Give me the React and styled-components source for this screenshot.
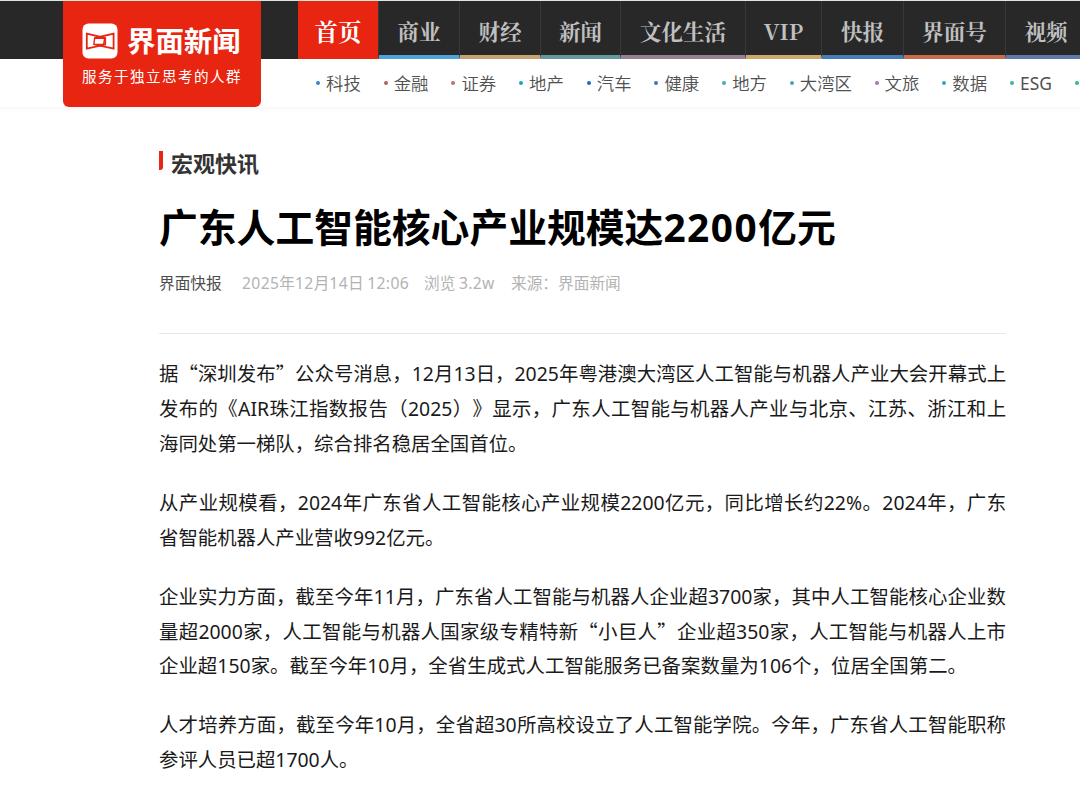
import styled, { createGlobalStyle } from "styled-components";

const GlobalStyle = createGlobalStyle`
    * {
        box-sizing: border-box;
    }
    body {
        margin: 0;
        background-color: #fff;
        font-family: "Noto Sans CJK SC", sans-serif;
        text-spacing-trim: space-all;
        overflow: hidden;
    }
`;

const Page = styled.div`
    width: 1080px;
    height: 792px;
    overflow: hidden;
`;

const Header = styled.header`
    position: relative;
    height: 107px;
    background-color: #fff;
    box-shadow: 0 1px 6px rgba(0, 0, 0, 0.05);
`;

const TopBar = styled.div`
    height: 59px;
    padding-left: 298px;
    border-top: 1px solid #dfe5e1;
    background-color: #282828;
    display: flex;
    overflow: hidden;
`;

const TopLink = styled.a`
    flex: none;
    width: ${(props) => props.$width}px;
    height: 58px;
    padding-top: 3px;
    border-right: 1px solid #383838;
    border-bottom: 4px solid ${(props) => props.$color};
    background-color: ${(props) => (props.$active ? "#e72511" : "transparent")};
    color: ${(props) => (props.$active ? "#fff" : "#bfbfbf")};
    font-family: "Noto Serif CJK SC", "Liberation Serif", serif;
    font-size: ${(props) => (props.$active ? 23.4 : 21.6)}px;
    font-weight: bold;
    line-height: 54px;
    text-align: center;
    white-space: nowrap;
`;

const SubBar = styled.div`
    height: 48px;
    padding-left: 316px;
    display: flex;
    align-items: center;
    overflow: hidden;
`;

const SubLink = styled.a`
    flex: none;
    width: ${(props) => props.$width}px;
    display: flex;
    align-items: center;
    color: #505050;
    font-size: 17.4px;
    font-weight: 350;
    line-height: 24px;
    white-space: nowrap;
    &::before {
        content: "";
        width: 4px;
        height: 4px;
        margin-right: 6px;
        border-radius: 50%;
        background-color: ${(props) => props.$color};
    }
`;

const SubText = styled.span`
    height: 24px;
`;

/* hangs over both bars */
const Brand = styled.a`
    position: absolute;
    top: 1px;
    left: 63px;
    width: 198px;
    height: 106px;
    padding: 22px 0 0 19px;
    border-radius: 0 0 6px 6px;
    background-color: #e72511;
    color: #fff;
`;

const BrandRow = styled.div`
    height: 36px;
    display: flex;
    align-items: center;
    gap: 9px;
    svg {
        flex: none;
    }
`;

const BrandName = styled.span`
    margin-top: -2px;
    font-size: 28.4px;
    font-weight: bold;
    line-height: 36px;
    white-space: nowrap;
`;

const Slogan = styled.div`
    margin-top: 6px;
    font-size: 14.6px;
    letter-spacing: 1.4px;
    line-height: 22px;
    white-space: nowrap;
`;

const Article = styled.article`
    width: 847px;
    margin-left: 159px;
    padding-top: 40px;
`;

const Channel = styled.div`
    height: 30px;
    display: flex;
    align-items: center;
    color: #333;
    font-size: 22px;
    font-weight: bold;
    line-height: 30px;
    &::before {
        content: "";
        width: 4px;
        height: 19px;
        margin: 0 8px 3px 0;
        border-radius: 0 0 3px 0;
        background-color: #e72511;
    }
`;

const Title = styled.h1`
    margin: 19px 0 0;
    height: 58px;
    color: #000;
    font-size: 38.8px;
    font-weight: bold;
    line-height: 58px;
    white-space: nowrap;
`;

const Meta = styled.div`
    height: 80px;
    padding-top: 17px;
    margin-bottom: 22px;
    border-bottom: 1px solid #e8e8e8;
    display: flex;
    color: #b3b3b3;
    font-size: 15.7px;
    line-height: 24px;
    white-space: nowrap;
`;

const MetaItem = styled.span`
    width: ${(props) => props.$width}px;
    color: ${(props) => (props.$dark ? "#4c4c4c" : "inherit")};
`;

const Paragraph = styled.p`
    margin: 0 0 24.1px;
    color: #1a1a1a;
    font-size: 19.4px;
    line-height: 34.9px;
`;

const Line = styled.span`
    display: block;
    width: ${(props) => (props.$width ? `${props.$width}px` : "100%")};
    height: 34.9px;
    text-align: justify;
    text-align-last: justify;
    white-space: nowrap;
`;

const Latin = styled.span`
    font-family: "Noto Sans", sans-serif;
    font-weight: ${(props) => props.$weight || "inherit"};
    letter-spacing: ${(props) => props.$spacing || 0}px;
    line-height: 1;
`;

const topLinks = [
    { text: "首页", width: 81, color: "#e72511", active: true },
    { text: "商业", width: 81, color: "#4fa3d8" },
    { text: "财经", width: 81, color: "#c9a36d" },
    { text: "新闻", width: 80, color: "#639a9d" },
    { text: "文化生活", width: 125, color: "#94808f" },
    { text: "VIP", width: 76, color: "#cba86c" },
    { text: "快报", width: 82, color: "#467cb8" },
    { text: "界面号", width: 102, color: "#c66b4c" },
    { text: "视频", width: 81, color: "#5d7ba6" },
];

const subLinks = [
    { text: "科技", width: 67.7, color: "#3585d0" },
    { text: "金融", width: 67.7, color: "#b9604f" },
    { text: "证券", width: 67.7, color: "#b27a65" },
    { text: "地产", width: 67.7, color: "#19a2bd" },
    { text: "汽车", width: 67.7, color: "#2567c5" },
    { text: "健康", width: 67.7, color: "#4c70b8" },
    { text: "地方", width: 67.7, color: "#42afad" },
    { text: "大湾区", width: 84.8, color: "#4aa6af" },
    { text: "文旅", width: 67.7, color: "#a279b0" },
    { text: "数据", width: 67.7, color: "#38a5b5" },
    { text: "ESG", width: 65, color: "#3bb59b" },
    { text: "", width: 10, color: "#3bb58d" },
];

const paragraphs = [
    [
        { text: "据“深圳发布”公众号消息，12月13日，2025年粤港澳大湾区人工智能与机器人产业大会开幕式上" },
        { text: "发布的《AIR珠江指数报告（2025）》显示，广东人工智能与机器人产业与北京、江苏、浙江和上" },
        { text: "海同处第一梯队，综合排名稳居全国首位。", width: 368 },
    ],
    [
        { text: "从产业规模看，2024年广东省人工智能核心产业规模2200亿元，同比增长约22%。2024年，广东" },
        { text: "省智能机器人产业营收992亿元。", width: 285 },
    ],
    [
        { text: "企业实力方面，截至今年11月，广东省人工智能与机器人企业超3700家，其中人工智能核心企业数" },
        { text: "量超2000家，人工智能与机器人国家级专精特新“小巨人”企业超350家，人工智能与机器人上市" },
        { text: "企业超150家。截至今年10月，全省生成式人工智能服务已备案数量为106个，位居全国第二。", width: 808 },
    ],
    [
        { text: "人才培养方面，截至今年10月，全省超30所高校设立了人工智能学院。今年，广东省人工智能职称" },
        { text: "参评人员已超1700人。", width: 199 },
    ],
];

// Latin letters and digits use their own face next to the Chinese text
const mixed = (text, spacing, weight) =>
    text.split(/([A-Za-z0-9.:%]+)/).map((part, i) =>
        i % 2 ? <Latin key={i} $spacing={spacing} $weight={weight}>{part}</Latin> : part
    );

const BrandIcon = () => (
    <svg width="36" height="36" viewBox="0 0 36 36">
        <rect x="0.5" y="0.5" width="35" height="35" rx="6" fill="#fff" />
        <g fill="none" stroke="#e72511" strokeWidth="1.8">
            <path d="M4.8 10.6 L23.2 15 V21.6 L4.8 25.6 Z" />
            <path d="M31.6 10.6 L13 15 V21.6 L31.6 25.6 Z" />
        </g>
        <path d="M12.6 15.4 H22.6 L21.6 21.4 H11.8 Z" fill="#fff" stroke="#e72511" strokeWidth="1.4" />
    </svg>
);

const App = () => {
    return (
        <Page lang="zh-CN">
            <GlobalStyle />
            <Header>
                <TopBar>
                    {topLinks.map((link) => (
                        <TopLink key={link.text} $width={link.width} $color={link.color} $active={link.active}>
                            {link.text}
                        </TopLink>
                    ))}
                </TopBar>
                <SubBar>
                    {subLinks.map((link) => (
                        <SubLink key={link.color} $width={link.width} $color={link.color}>
                            <SubText>{mixed(link.text, 0, 400)}</SubText>
                        </SubLink>
                    ))}
                </SubBar>
                <Brand>
                    <BrandRow>
                        <BrandIcon />
                        <BrandName>界面新闻</BrandName>
                    </BrandRow>
                    <Slogan>服务于独立思考的人群</Slogan>
                </Brand>
            </Header>
            <Article>
                <Channel>宏观快讯</Channel>
                <Title>{mixed("广东人工智能核心产业规模达2200亿元", 1.5)}</Title>
                <Meta>
                    <MetaItem $width={83} $dark>界面快报</MetaItem>
                    <MetaItem $width={182}>{mixed("2025年12月14日 12:06", 0.35)}</MetaItem>
                    <MetaItem $width={87}>{mixed("浏览 3.2w", 0.3)}</MetaItem>
                    <MetaItem>来源：界面新闻</MetaItem>
                </Meta>
                {paragraphs.map((lines, i) => (
                    <Paragraph key={i}>
                        {lines.map((line) => (
                            <Line key={line.text} $width={line.width}>{mixed(line.text)}</Line>
                        ))}
                    </Paragraph>
                ))}
            </Article>
        </Page>
    );
};

export default App;
